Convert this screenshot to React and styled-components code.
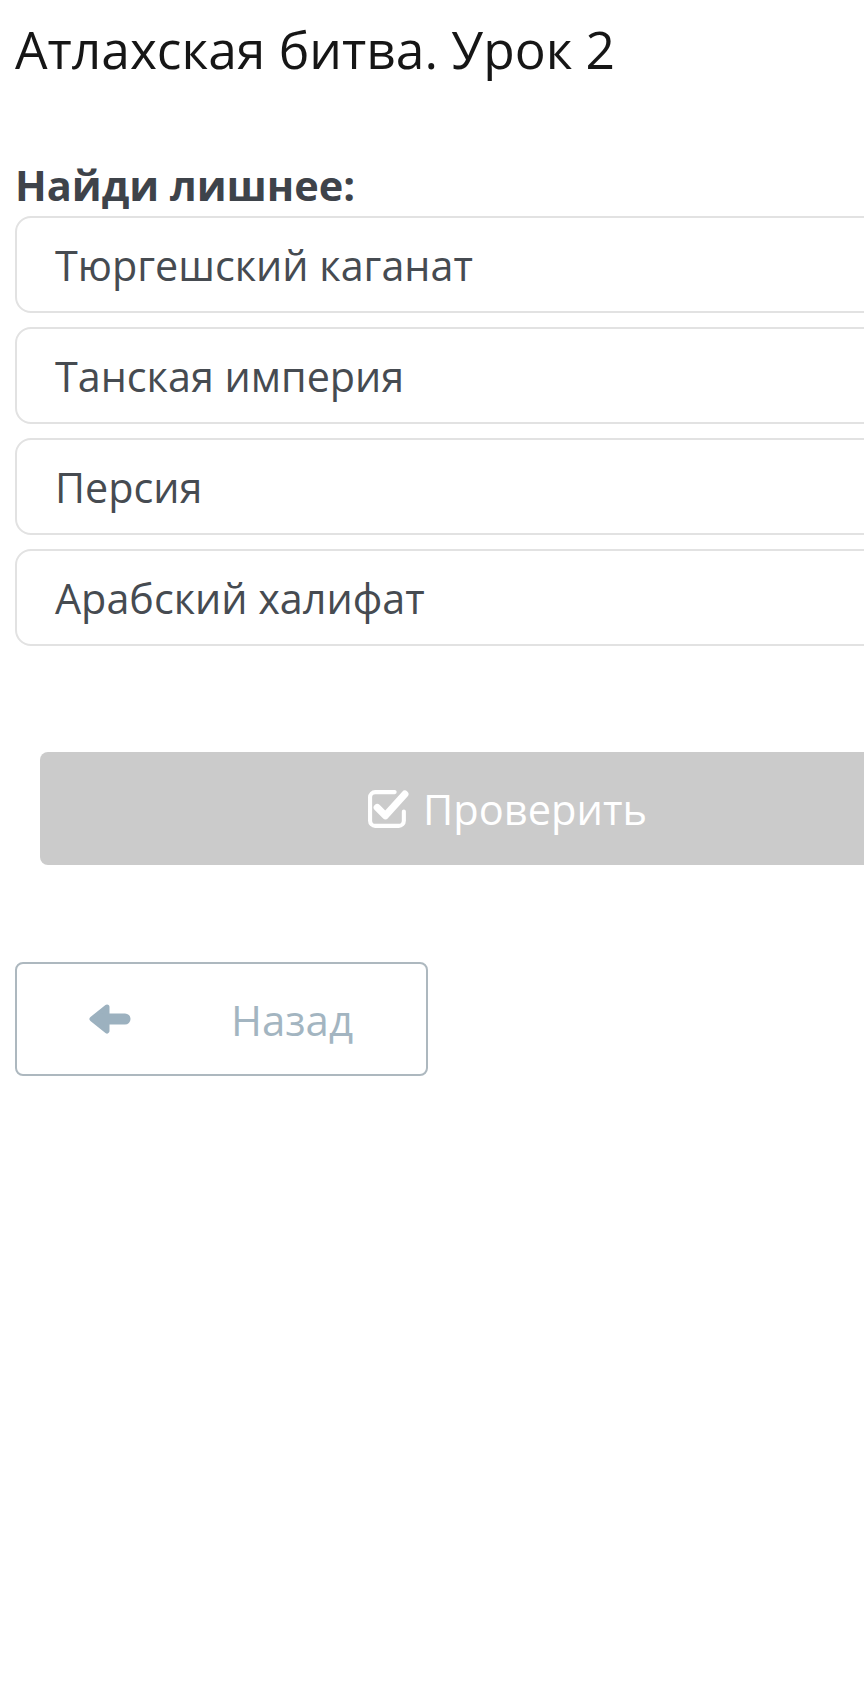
import React from 'react'
import styled, { createGlobalStyle } from 'styled-components'

const GlobalStyle = createGlobalStyle`
    html, body {
        margin: 0;
        padding: 0;
        background: #fff;
        overflow-x: hidden;
    }
    body {
        font-family: "Open Sans", "Noto Sans", sans-serif;
    }
`

const Page = styled.div`
    width: 1000px;
    padding: 0 0 0 15px;
    min-height: 1700px;
`

const Title = styled.h1`
    margin: 0;
    padding-top: 13px;
    font-size: 51.5px;
    font-weight: 400;
    line-height: 72px;
    color: #161616;
`

const Question = styled.h3`
    margin: 75px 0 6px;
    font-size: 41.5px;
    font-weight: 700;
    line-height: 50px;
    color: #3e434a;
`

const Options = styled.div`
    display: flex;
    flex-direction: column;
    gap: 14px;
`

const Option = styled.div`
    display: flex;
    align-items: center;
    box-sizing: border-box;
    height: 97px;
    width: 960px;
    padding-left: 38px;
    border: 2px solid #e2e2e2;
    border-radius: 16px;
    font-size: 41.3px;
    color: #464b51;
`

const CheckButton = styled.button`
    display: flex;
    align-items: center;
    justify-content: center;
    gap: 13px;
    box-sizing: border-box;
    width: 934px;
    height: 113px;
    margin: 106px 0 0 25px;
    border: none;
    border-radius: 8px;
    background: #cbcbcb;
    color: #fff;
    font-family: inherit;
    font-size: 41.6px;
`

const BackButton = styled.button`
    display: flex;
    align-items: center;
    box-sizing: border-box;
    width: 413px;
    height: 114px;
    margin-top: 97px;
    padding: 0 0 0 72px;
    border: 2px solid #adb8bf;
    border-radius: 8px;
    background: #fff;
    color: #a3b5c1;
    font-family: inherit;
    font-size: 42px;
`

const BackLabel = styled.span`
    margin-left: 100px;
`

const CheckIcon = () => (
    <svg width="43" height="39" viewBox="0 0 42 38" fill="none">
        <path
            d="M27 3H8a5 5 0 0 0-5 5v23a5 5 0 0 0 5 5h23a5 5 0 0 0 5-5v-9"
            stroke="#fff"
            strokeWidth="4"
            strokeLinecap="round"
        />
        <path
            d="M10 18l8 8L37 5"
            stroke="#fff"
            strokeWidth="7"
            strokeLinecap="round"
            strokeLinejoin="round"
        />
    </svg>
)

const ArrowIcon = () => (
    <svg width="42" height="30" viewBox="0 0 42 30" fill="none">
        <path
            d="M18 3L3 15l15 12z"
            fill="#9cb1bf"
            stroke="#9cb1bf"
            strokeWidth="5"
            strokeLinejoin="round"
        />
        <path d="M14 15h22" stroke="#9cb1bf" strokeWidth="11" strokeLinecap="round" />
    </svg>
)

const options = [
    'Тюргешский каганат',
    'Танская империя',
    'Персия',
    'Арабский халифат',
]

export default function App() {
    return (
        <Page>
            <GlobalStyle />
            <Title>Атлахская битва. Урок 2</Title>
            <Question>Найди лишнее:</Question>
            <Options>
                {options.map((o) => (
                    <Option key={o}>{o}</Option>
                ))}
            </Options>
            <CheckButton>
                <CheckIcon />
                Проверить
            </CheckButton>
            <BackButton>
                <ArrowIcon />
                <BackLabel>Назад</BackLabel>
            </BackButton>
        </Page>
    )
}
